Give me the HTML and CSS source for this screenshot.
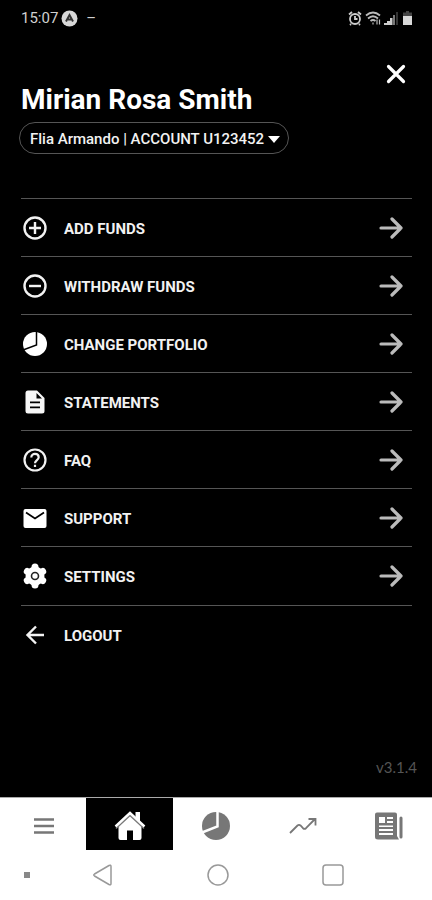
FILE: index.html
```html
<!DOCTYPE html>
<html lang="en">
<head>
  <meta charset="utf-8" />
  <meta name="viewport" content="width=device-width, initial-scale=1"/>
  <title>Account menu</title>
  <link rel="stylesheet" href="styles.css">
</head>
<body>
  <div class="status-bar">
    <span class="clock">15:07</span>
    <svg class="app-badge" width="17" height="17" viewBox="0 0 17 17">
      <circle cx="8.500" cy="8.500" r="8" fill="#d8d8d8"/>
      <path d="M5 11.500 8.500 5 12 11.500M7 9.500h3" fill="none" stroke="#333" stroke-width="2"/>
    </svg>
    <span class="dash">–</span>
    <div class="status-icons">
      <svg width="14" height="16" viewBox="0 0 14 16" fill="none" stroke="#ccc" stroke-width="1.800">
        <circle cx="7" cy="9" r="5"/>
        <path d="M1 4.500 4 2M13 4.500 10 2M7 6v3h2.500M3 14l-1 1M11 14l1 1"/>
      </svg>
      <svg width="16" height="16" viewBox="0 0 16 16" fill="none" stroke="#bbb" stroke-width="1.800">
        <path d="M1 5.500Q8-.5 15 5.500M3 8.500Q8 4 13 8.500M5.500 11Q8 9 10.500 11"/>
        <path d="M8 12.500v2M12 9.500v5M14.500 9.500v5" stroke-width="1.200"/>
      </svg>
      <svg width="14" height="16" viewBox="0 0 14 16">
        <path d="M0 15v-2h3v2zM3 15v-4h3v4zM6 15V8h2.500v7z" fill="#ccc"/>
        <path d="M9 15V5h2v10z" fill="#777"/>
        <path d="M12 15V2h2v13z" fill="#333"/>
      </svg>
      <svg class="battery" width="9" height="16" viewBox="0 0 9 16">
        <path d="M3 1h3v1.500h3V6H0V2.500h3z" fill="#444"/>
        <path d="M0 6h9v9H0z" fill="#d8d8d8"/>
      </svg>
    </div>
  </div>

  <header class="account">
    <h1>Mirian Rosa Smith</h1>
    <button class="close" type="button" aria-label="Close">
      <svg width="20" height="20" viewBox="0 0 20 20"><path d="M2.500 2.500 17.500 17.500M17.500 2.500 2.500 17.500" stroke="#fff" stroke-width="3.200" stroke-linecap="round"/></svg>
    </button>
    <button class="account-picker" type="button">
      Flia Armando | ACCOUNT U123452
      <svg width="12" height="7" viewBox="0 0 12 7"><path d="M0 0h12L6 7z" fill="#fff"/></svg>
    </button>
  </header>

  <!-- arrow shared by the menu rows -->
  <svg class="defs" width="0" height="0">
    <symbol id="arrow" viewBox="0 0 24 24">
      <path d="M2 12h20M13 3 22 12 13 21" fill="none" stroke="#bbb" stroke-width="3.200" stroke-linecap="round" stroke-linejoin="round"/>
    </symbol>
  </svg>

  <main>
    <ul class="menu">
      <li><a href="#">
        <svg class="icon" viewBox="0 0 26 26" fill="none" stroke="#f2f2f2" stroke-width="2.400">
          <circle cx="13" cy="13" r="10.500"/><path d="M13 7v12M7 13h12"/>
        </svg>
        <span>ADD FUNDS</span>
        <svg class="arrow"><use href="#arrow"/></svg>
      </a></li>
      <li><a href="#">
        <svg class="icon" viewBox="0 0 26 26" fill="none" stroke="#f2f2f2" stroke-width="2.400">
          <circle cx="13" cy="13" r="10.500"/><path d="M7 13h12"/>
        </svg>
        <span>WITHDRAW FUNDS</span>
        <svg class="arrow"><use href="#arrow"/></svg>
      </a></li>
      <li><a href="#">
        <svg class="icon" viewBox="0 0 26 26">
          <circle cx="13" cy="13" r="12" fill="#fff"/>
          <path d="M14.500 0v14L1 19" fill="none" stroke="#000" stroke-width="1.500"/>
        </svg>
        <span>CHANGE PORTFOLIO</span>
        <svg class="arrow"><use href="#arrow"/></svg>
      </a></li>
      <li><a href="#">
        <svg class="icon" viewBox="0 0 26 26">
          <path d="M6 1.500h9L22.500 9v13q0 2.500-2.500 2.500H6Q3.500 24.500 3.500 22V4Q3.500 1.500 6 1.500z" fill="#f7f7f7"/>
          <path d="M14.500 4v5.500H20zM8 12.500h10v1.800H8zM8 17.500h10v1.800H8z" fill="#000"/>
        </svg>
        <span>STATEMENTS</span>
        <svg class="arrow"><use href="#arrow"/></svg>
      </a></li>
      <li><a href="#">
        <svg class="icon" viewBox="0 0 26 26" fill="none" stroke="#f2f2f2" stroke-width="2.200">
          <circle cx="13" cy="13" r="10.500"/>
          <path d="M9.300 10.500c0-5 7.400-4.500 7.400-.2 0 2.700-3.700 2.900-3.700 6M13 17.700v2.300"/>
        </svg>
        <span>FAQ</span>
        <svg class="arrow"><use href="#arrow"/></svg>
      </a></li>
      <li><a href="#">
        <svg class="icon" viewBox="0 0 26 26">
          <rect x="1.500" y="4" width="23" height="19" rx="2" fill="#fff"/>
          <path d="M4 7.500 13 13.500 22 7.500" fill="none" stroke="#000" stroke-width="1.800"/>
        </svg>
        <span>SUPPORT</span>
        <svg class="arrow"><use href="#arrow"/></svg>
      </a></li>
      <li><a href="#">
        <svg class="icon" viewBox="0 0 26 26">
          <circle cx="13" cy="13" r="9.500" fill="#fff"/>
          <g stroke="#fff" stroke-width="7" stroke-linecap="round">
            <path d="M13 4v18M5.300 8.500l15.400 9M5.300 17.500 20.700 8.500"/>
          </g>
          <circle cx="13" cy="13" r="3.500" fill="#fff" stroke="#222" stroke-width="1.600"/>
        </svg>
        <span>SETTINGS</span>
        <svg class="arrow"><use href="#arrow"/></svg>
      </a></li>
      <li><a href="#">
        <svg class="icon" viewBox="0 0 26 26" fill="none" stroke="#f2f2f2" stroke-width="2.400">
          <path d="M22 13H5.500M14 4.500 5.500 13 14 21.500"/>
        </svg>
        <span>LOGOUT</span>
      </a></li>
    </ul>
  </main>

  <p class="version">v3.1.4</p>

  <nav class="tabs">
    <a href="#" aria-label="Menu">
      <svg width="22" height="18" viewBox="0 0 22 18"><path d="M1 2.500h20M1 9h20M1 15.500h20" stroke="#777" stroke-width="2.500"/></svg>
    </a>
    <a href="#" class="active" aria-label="Home">
      <svg width="32" height="32" viewBox="0 0 32 32">
        <path d="M16 5 27.500 15.500V28q0 2-2 2H19v-9.500h-6V30H6.500q-2 0-2-2V15.500z" fill="#fff"/>
        <path d="M21.500 2H26v10l-4.500-4z" fill="#fff"/>
        <path d="M2 18.500 16 5.500 30 18.500" fill="none" stroke="#777" stroke-width="1.600"/>
        <path d="M1.500 16.500 16 3 30.500 16.500" fill="none" stroke="#fff" stroke-width="2.400"/>
      </svg>
    </a>
    <a href="#" aria-label="Portfolio">
      <svg width="30" height="30" viewBox="0 0 30 30">
        <circle cx="15" cy="15" r="14" fill="#777"/>
        <path d="M16.500 0v15.500L1 21.500" fill="none" stroke="#fff" stroke-width="2.500"/>
      </svg>
    </a>
    <a href="#" aria-label="Performance">
      <svg width="28" height="20" viewBox="0 0 28 20" fill="none" stroke="#777" stroke-width="1.800">
        <path d="M1 17 8.500 9.500q1.500-1.200 3 0l2.500 2.700q1.500 1.300 3 0L26 3M19.500 3H26.500V9.500"/>
      </svg>
    </a>
    <a href="#" aria-label="News">
      <svg width="28" height="28" viewBox="0 0 28 28">
        <path d="M2 .5h18q2 0 2 2V24l2 3.500H3Q0 27.500 0 25V2.500Q0 .5 2 .5z" fill="#777"/>
        <path d="M4 5h6v6H4zM12 5h6v2h-6zM12 9h6v2h-6zM4 13.500h14V15H4zM4 17h14v2H4zM4 21h14v2H4z" fill="#fff"/>
        <path d="M26 6v19" stroke="#777" stroke-width="3" stroke-linecap="round"/>
      </svg>
    </a>
  </nav>

  <div class="system-nav">
    <span class="dot"></span>
    <div class="system-keys">
      <button type="button" aria-label="Back">
        <svg width="22" height="22" viewBox="0 0 22 22"><path d="M2.500 10 17 1.500q2-1 2 1v17q0 2-2 1L2.500 12q-1.500-1 0-2z"/></svg>
      </button>
      <button type="button" aria-label="Home screen">
        <svg width="22" height="22" viewBox="0 0 22 22"><circle cx="11" cy="11" r="10"/></svg>
      </button>
      <button type="button" aria-label="Recent apps">
        <svg width="22" height="22" viewBox="0 0 22 22"><rect x="1" y="1" width="20" height="20" rx="3"/></svg>
      </button>
    </div>
  </div>
</body>
</html>
```
FILE: styles.css
```css
* {
  box-sizing: border-box;
}

body {
  display: flex;
  flex-direction: column;
  min-height: 100vh;
  margin: 0;
  background: #000;
  color: #f2f2f2;
  font-family: Roboto, sans-serif;
}

svg {
  display: block;
  flex: none;
}

button {
  padding: 0;
  border: 0;
  background: none;
  color: inherit;
  font: inherit;
  cursor: pointer;
}

a {
  color: inherit;
  text-decoration: none;
}

.defs {
  position: absolute;
}

/* status bar */
.status-bar {
  display: flex;
  align-items: center;
  height: 36px;
  padding: 0 20px 0 21px;
  font-size: 15px;
  color: #d0d0d0;
}

.app-badge {
  margin: 0 8px 0 3px;
}

.status-icons {
  display: flex;
  gap: 3px;
  margin-left: auto;
}

.battery {
  margin-left: 2px;
}

/* account header */
.account {
  display: grid;
  grid-template-columns: 1fr auto;
  padding: 28px 26px 44px 19px;
}

h1 {
  margin: 20px 0 6px 2px;
  color: #fff;
  font-size: 28px;
  font-weight: 700;
  line-height: 32px;
}

.close {
  align-self: start;
}

.account-picker {
  display: flex;
  align-items: center;
  justify-self: start;
  gap: 4px;
  height: 32px;
  padding: 2px 8px 0 10px;
  border: 1px solid #555;
  border-radius: 16px;
  font-size: 15px;
  font-weight: 500;
}

/* menu */
.menu {
  margin: 0 20px 0 21px;
  padding: 0;
  list-style: none;
}

.menu li {
  border-top: 1px solid #555;
}

.menu a {
  display: flex;
  align-items: center;
  gap: 16px;
  height: 57px;
  padding: 0 9px 0 1px;
  font-size: 15px;
  font-weight: 700;
}

.menu li:last-child {
  margin-top: 1px;
}

.menu span {
  padding-top: 2px;
}

.icon {
  width: 26px;
  height: 26px;
}

.arrow {
  width: 24px;
  height: 24px;
  margin-left: auto;
}

.version {
  margin: auto 15px 20px;
  color: #555;
  font-family: Lato, sans-serif;
  font-size: 15px;
  line-height: 20px;
  text-align: right;
}

/* bottom bars */
.tabs {
  display: grid;
  grid-template-columns: repeat(5, 1fr);
  height: 53px;
  border-top: 1px solid #aaa;
  background: #fff;
}

.tabs a {
  display: flex;
  align-items: center;
  justify-content: center;
  padding: 4px 0 0 1px;
}

.tabs .active {
  background: #000;
}

.system-nav {
  display: flex;
  align-items: center;
  height: 50px;
  padding: 0 88px 0 24px;
  background: #fff;
}

.system-keys {
  display: flex;
  flex: 1;
  justify-content: space-between;
  margin-left: 62px;
}

.system-nav svg {
  fill: none;
  stroke: #999;
  stroke-width: 1.5;
}

.dot {
  width: 6px;
  height: 6px;
  background: #888;
}
```
